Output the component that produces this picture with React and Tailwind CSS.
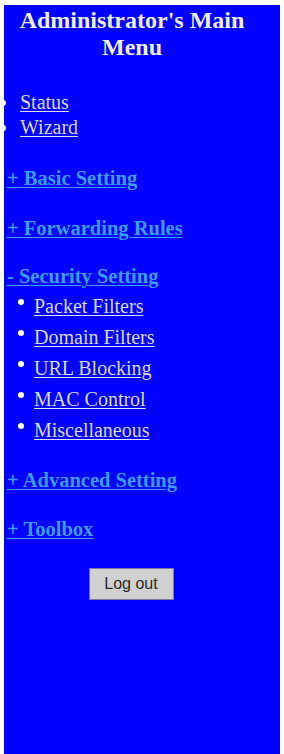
import React from 'react'

const securityItems = ['Packet Filters', 'Domain Filters', 'URL Blocking', 'MAC Control', 'Miscellaneous']

function HeaderLink({ children, className = '' }) {
  return (
    <a
      href="#"
      className={`ml-[3px] block w-fit text-[20.5px] font-bold leading-[24px] text-[#3f9cff] underline decoration-1 underline-offset-2 ${className}`}
    >
      {children}
    </a>
  )
}

export default function App() {
  return (
    <div className="min-h-[754px] bg-white pl-[4px] pr-[4px] pt-[5px]" style={{ fontFamily: '"Liberation Serif", serif' }}>
      <div className="min-h-[749px] bg-[#0000ff] pb-10">
        {/* Title */}
        <h1 className="pr-[20px] pt-[2px] text-center text-[24px] font-bold leading-[27px] text-[#eeeefc]">
          Administrator's Main
          <br />
          Menu
        </h1>

        {/* Top links */}
        <ul className="mt-[29px] text-[20px] leading-[25px]">
          {['Status', 'Wizard'].map((s) => (
            <li key={s} className="flex items-center">
              <span className="-ml-[4px] mr-[14px] h-[6px] w-[6px] rounded-full bg-white" />
              <a href="#" className="text-[#dcdcec] underline decoration-1 underline-offset-2">{s}</a>
            </li>
          ))}
        </ul>

        <HeaderLink className="mt-[26px]">+ Basic Setting</HeaderLink>
        <HeaderLink className="mt-[26px]">+ Forwarding Rules</HeaderLink>
        <HeaderLink className="mt-[24px]">- Security Setting</HeaderLink>

        <ul className="mt-[3px] text-[20px] leading-[31px]">
          {securityItems.map((s) => (
            <li key={s} className="flex items-center pl-[14px]">
              <span className="mr-[10px] -mt-[9px] h-[6px] w-[6px] rounded-full bg-white" />
              <a href="#" className="text-[#dcdcec] underline decoration-1 underline-offset-2">{s}</a>
            </li>
          ))}
        </ul>

        <HeaderLink className="mt-[22px]">+ Advanced Setting</HeaderLink>
        <HeaderLink className="mt-[25px]">+ Toolbox</HeaderLink>

        <div className="mt-[27px] flex justify-center pr-[22px]">
          <button
            className="h-[32px] w-[85px] border border-[#7a7a9a] bg-[#d0d0d0] text-[16px] text-[#2a2a2a]"
            style={{ fontFamily: '"Liberation Sans", sans-serif' }}
          >
            Log out
          </button>
        </div>
      </div>
    </div>
  )
}
